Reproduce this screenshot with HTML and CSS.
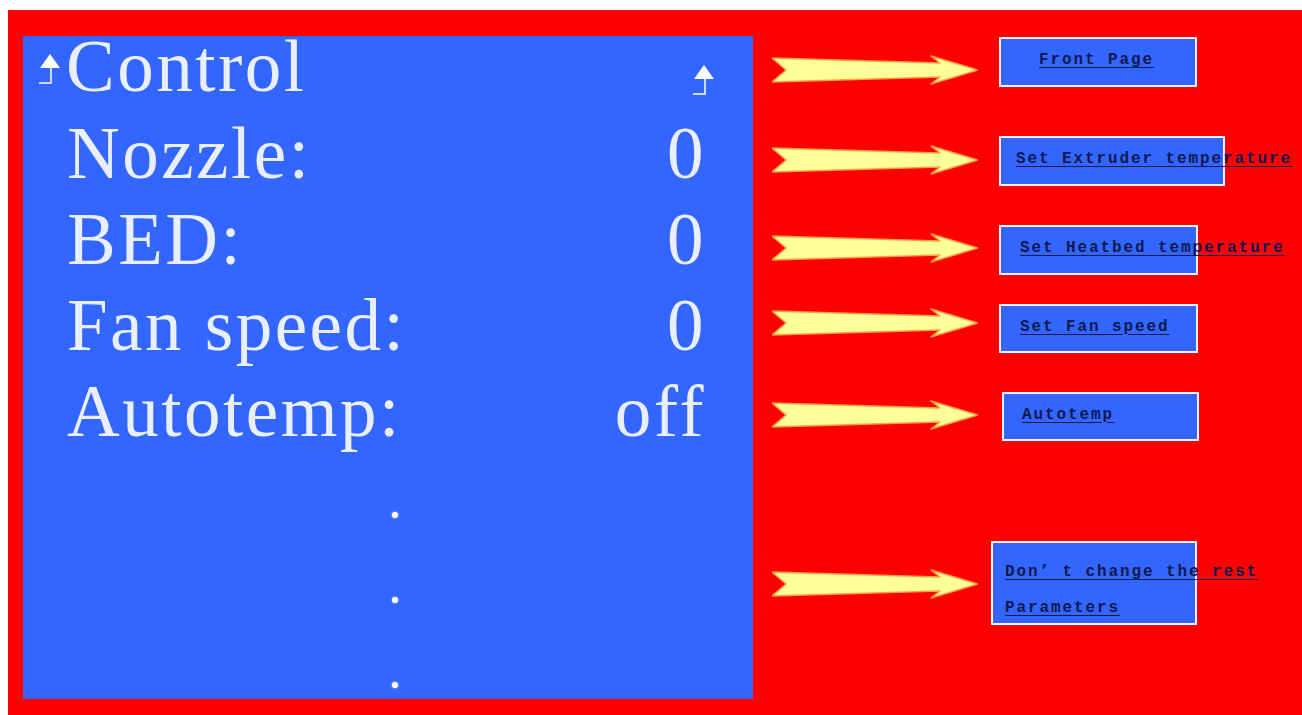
FILE: index.html
```html
<!DOCTYPE html>
<html lang="en">
<head>
<meta charset="utf-8">
<title>Control menu</title>
<link rel="stylesheet" href="styles.css">
</head>
<body>
<div class="frame">
  <section class="screen">
    <div class="title-row">
      <svg class="back-icon" viewBox="0 0 24 32" width="24" height="32"><polygon points="12,1 2,15 22,15" fill="#ffffff"/><path d="M13,15 V30 H1" fill="none" stroke="#ffffff" stroke-width="1.5"/></svg>
      <span class="title">Control</span>
      <svg class="back-icon back-icon-right" viewBox="0 0 24 32" width="24" height="32"><polygon points="12,1 2,15 22,15" fill="#ffffff"/><path d="M13,15 V30 H1" fill="none" stroke="#ffffff" stroke-width="1.5"/></svg>
    </div>
    <div class="items">
      <div class="item"><span>Nozzle:</span><span>0</span></div>
      <div class="item"><span>BED:</span><span>0</span></div>
      <div class="item"><span>Fan speed:</span><span>0</span></div>
      <div class="item"><span>Autotemp:</span><span>off</span></div>
    </div>
    <div class="dots"><i class="dot"></i><i class="dot"></i><i class="dot"></i></div>
  </section>
  <section class="notes">
    <div class="note n1">
      <svg class="arrow a1" viewBox="0 0 206 30" width="206" height="30"><path d="M0,3 L168,8 L159,1 L206,15 L159,29 L168,22 L0,27 L14,15 Z" fill="#ffff99" stroke="#ffa040" stroke-width="1.5" stroke-linejoin="round"/></svg>
      <div class="box b1"><span class="label">Front Page</span></div>
    </div>
    <div class="note n2">
      <svg class="arrow a2" viewBox="0 0 206 30" width="206" height="30"><path d="M0,3 L168,8 L159,1 L206,15 L159,29 L168,22 L0,27 L14,15 Z" fill="#ffff99" stroke="#ffa040" stroke-width="1.5" stroke-linejoin="round"/></svg>
      <div class="box b2"><span class="label">Set Extruder temperature</span></div>
    </div>
    <div class="note n3">
      <svg class="arrow a3" viewBox="0 0 206 30" width="206" height="30"><path d="M0,3 L168,8 L159,1 L206,15 L159,29 L168,22 L0,27 L14,15 Z" fill="#ffff99" stroke="#ffa040" stroke-width="1.5" stroke-linejoin="round"/></svg>
      <div class="box b3"><span class="label">Set Heatbed temperature</span></div>
    </div>
    <div class="note n4">
      <svg class="arrow a4" viewBox="0 0 206 30" width="206" height="30"><path d="M0,3 L168,8 L159,1 L206,15 L159,29 L168,22 L0,27 L14,15 Z" fill="#ffff99" stroke="#ffa040" stroke-width="1.5" stroke-linejoin="round"/></svg>
      <div class="box b4"><span class="label">Set Fan speed</span></div>
    </div>
    <div class="note n5">
      <svg class="arrow a5" viewBox="0 0 206 30" width="206" height="30"><path d="M0,3 L168,8 L159,1 L206,15 L159,29 L168,22 L0,27 L14,15 Z" fill="#ffff99" stroke="#ffa040" stroke-width="1.5" stroke-linejoin="round"/></svg>
      <div class="box b5"><span class="label">Autotemp </span></div>
    </div>
    <div class="note n6">
      <svg class="arrow a6" viewBox="0 0 206 30" width="206" height="30"><path d="M0,3 L168,8 L159,1 L206,15 L159,29 L168,22 L0,27 L14,15 Z" fill="#ffff99" stroke="#ffa040" stroke-width="1.5" stroke-linejoin="round"/></svg>
      <div class="box b6"><span class="label">Don’ t change the rest </span><span class="label">Parameters</span></div>
    </div>
  </section>
</div>
</body>
</html>
```

FILE: styles.css
```css
html, body {
  margin: 0;
  padding: 0;
  background: #ffffff;
  overflow: hidden;
}

body {
  width: 100vw;
  height: 100vh;
}

.frame {
  margin: 10px 0 0 8px;
  width: calc(100vw - 8px);
  height: calc(100vh - 10px);
  background: #ff0000;
  display: flex;
  align-items: flex-start;
}

/* LCD screen */
.screen {
  margin: 26px 0 0 15px;
  width: 730px;
  height: 663px;
  background: #3366ff;
  flex-shrink: 0;
  color: #e9efff;
  font-family: "Liberation Serif", "Times New Roman", serif;
  font-size: 73px;
  letter-spacing: 2.5px;
}

.title-row {
  display: flex;
  align-items: center;
  height: 62px;
  line-height: 62px;
}

.back-icon {
  flex-shrink: 0;
  margin-left: 15px;
  margin-top: 4px;
}

.title {
  margin-left: 4px;
  flex: 1;
}

.back-icon-right {
  margin-left: 0;
  margin-right: 37px;
  margin-top: 26px;
}

.items {
  margin-top: 13px;
  padding: 0 47px 0 44px;
}

.item {
  display: flex;
  justify-content: space-between;
  height: 86px;
  line-height: 86px;
  white-space: nowrap;
}

.dots {
  display: flex;
  flex-direction: column;
  gap: 79px;
  margin-top: 57px;
  padding-left: 369px;
}

.dot {
  display: block;
  width: 6px;
  height: 6px;
  border-radius: 50%;
  background: #ffffff;
  box-shadow: 0 0 2px #dfe8ff;
}

/* annotations */
.notes {
  display: flex;
  flex-direction: column;
  padding-top: 27px;
}

.note {
  display: flex;
  align-items: flex-start;
}

.n2 { margin-top: 49px; }
.n3 { margin-top: 39px; }
.n4 { margin-top: 29px; }
.n5 { margin-top: 39px; }
.n6 { margin-top: 100px; }

.arrow {
  flex-shrink: 0;
  margin-left: 19px;
}

.a1 { margin-top: 18px; }
.a2 { margin-top: 9px; }
.a3 { margin-top: 8px; }
.a4 { margin-top: 4px; }
.a5 { margin-top: 8px; }
.a6 { margin-top: 28px; }

.box {
  box-sizing: border-box;
  height: 50px;
  margin-left: 21px;
  border: 2px solid #fdf0f4;
  background: #3366ff;
  display: flex;
  flex-direction: column;
  justify-content: center;
  white-space: nowrap;
  flex-shrink: 0;
}

.b1 { width: 198px; padding-left: 38px; }
.b2 { width: 226px; padding-left: 15px; }
.b3 { width: 199px; padding-left: 19px; }
.b4 { width: 199px; height: 49px; padding-left: 19px; }
.b5 { width: 197px; height: 49px; margin-left: 24px; padding-left: 18px; }
.b6 {
  width: 206px;
  height: 84px;
  margin-left: 13px;
  padding-left: 12px;
  justify-content: flex-start;
  padding-top: 11px;
}

.label {
  font-family: "Liberation Mono", "Courier New", monospace;
  font-weight: bold;
  font-size: 16px;
  letter-spacing: 1.9px;
  color: #0f1850;
  text-decoration: underline;
  text-underline-offset: 3px;
  line-height: 20px;
  margin-top: -4px;
}

.b6 .label {
  line-height: 36px;
  margin-top: 0;
}
```
